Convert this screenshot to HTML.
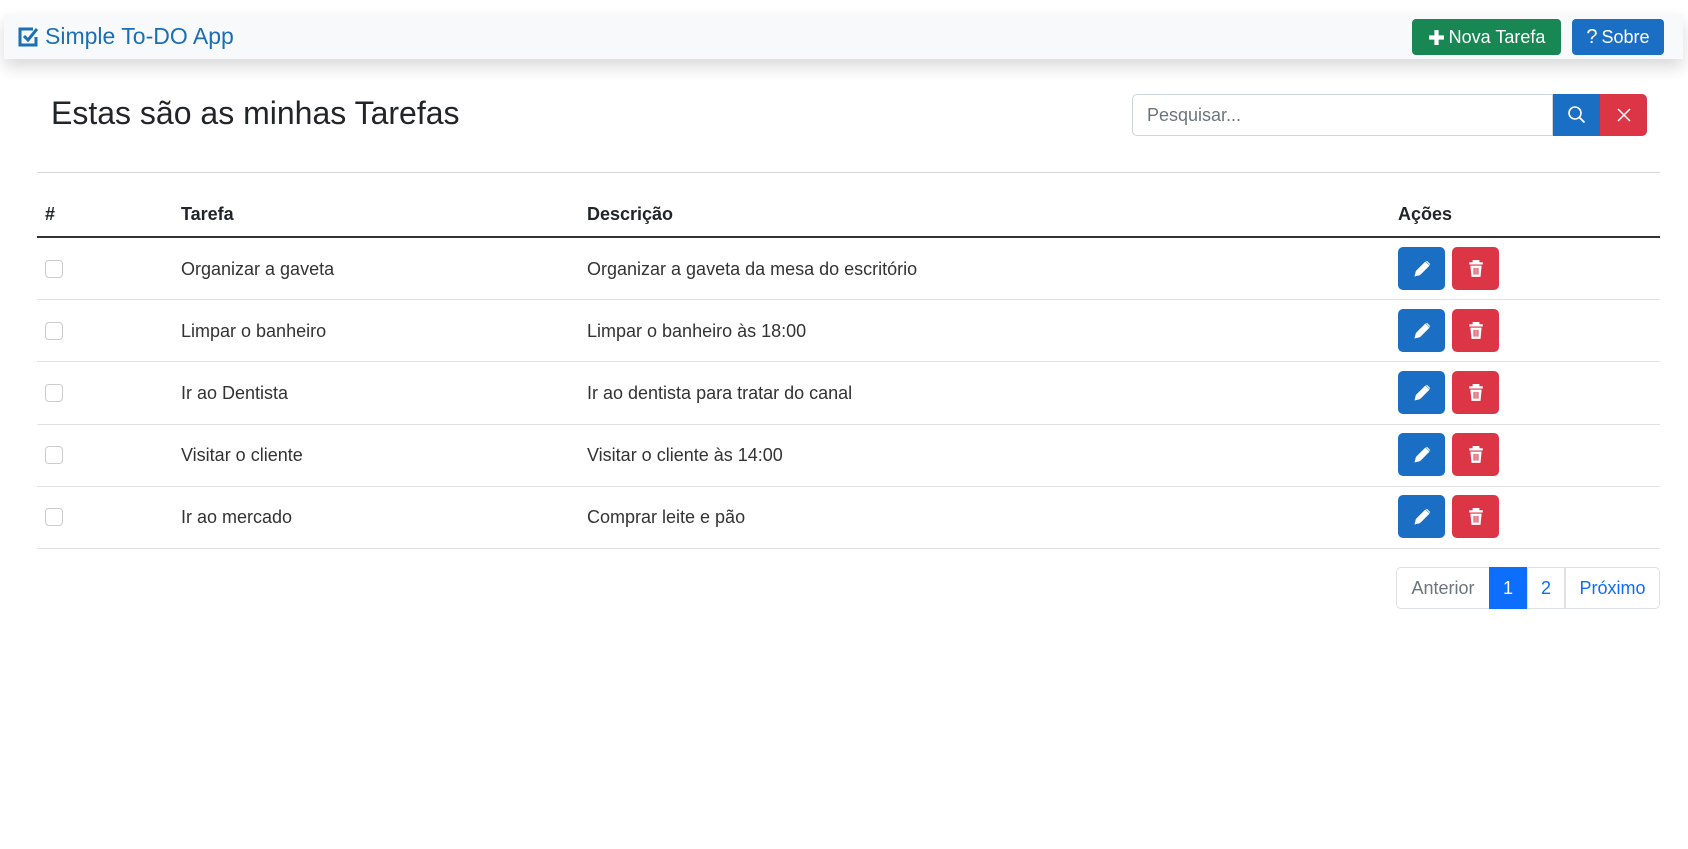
<!DOCTYPE html>
<html><head><meta charset="utf-8"><style>
*{box-sizing:border-box;margin:0;padding:0}
body{width:1688px;height:849px;background:#fff;font-family:"Liberation Sans",Arial,sans-serif;color:#212529;position:relative;overflow:hidden}
.nav{position:absolute;left:4px;top:14px;width:1679px;height:45px;background:#f8f9fa;box-shadow:0 8px 16px rgba(0,0,0,.15)}
.brand{position:absolute;left:14px;top:9px;font-size:23px;color:#1a6fb5;display:flex;align-items:center;gap:7px}
.btn{position:absolute;top:5px;height:36px;border-radius:4px;color:#fff;font-size:18px;display:flex;align-items:center;justify-content:center;gap:4px}
h1{position:absolute;left:51px;top:95px;font-size:32px;font-weight:400;color:#212529}
.search{position:absolute;left:1132px;top:94px;width:421px;height:42px;border:1px solid #ced4da;border-radius:5px 0 0 5px;font-size:18px;color:#6c757d;padding:10px 14px}
.sb{position:absolute;top:94px;height:42px;width:47px;display:flex;align-items:center;justify-content:center}
.hr{position:absolute;left:37px;top:172px;width:1623px;height:1px;background:#d8d8d8}
.th{position:absolute;top:204px;font-size:18px;font-weight:bold}
.line{position:absolute;left:37px;width:1623px;height:1px;background:#dee2e6}
.td{position:absolute;font-size:18px;color:#333}
.cb{position:absolute;left:45px;width:18px;height:18px;border:1px solid #ccc;border-radius:4px}
.ab{position:absolute;width:47px;height:43px;border-radius:5px;display:flex;align-items:center;justify-content:center}
.pg{position:absolute;top:567px;height:42px;border:1px solid #dee2e6;font-size:18px;display:flex;align-items:center;justify-content:center;color:#0d6efd}
</style></head><body>
<div class="nav">
 <div class="brand"><svg width="20" height="20" viewBox="0 0 20 20"><path d="M15 2H2v16h16v-8" fill="none" stroke="#1a6fb5" stroke-width="3"/><path d="M6 9l4 4 9-11" fill="none" stroke="#1a6fb5" stroke-width="3"/></svg>Simple To-DO App</div>
 <div class="btn" style="left:1408px;width:149px;background:#198754"><svg width="17" height="17" viewBox="0 0 16 16"><path d="M8 1v14M1 8h14" stroke="#fff" stroke-width="4"/></svg>Nova Tarefa</div>
 <div class="btn" style="left:1568px;width:92px;background:#1a6fc4"><b style="font-weight:400;font-size:20px">?</b>Sobre</div>
</div>
<h1>Estas são as minhas Tarefas</h1>
<div class="search">Pesquisar...</div>
<div class="sb" style="left:1553px;background:#1a6fc4"><svg width="20" height="20" viewBox="0 0 20 20"><circle cx="8" cy="8" r="6" fill="none" stroke="#fff" stroke-width="1.6"/><path d="M12.5 12.5l5 5" stroke="#fff" stroke-width="1.8"/></svg></div>
<div class="sb" style="left:1600px;background:#dc3545;border-radius:0 5px 5px 0"><svg width="16" height="16" viewBox="0 0 16 16"><path d="M2 2l12 12M14 2L2 14" stroke="#fff" stroke-width="1.5"/></svg></div>
<div class="hr"></div>
<div class="th" style="left:45px">#</div>
<div class="th" style="left:181px">Tarefa</div>
<div class="th" style="left:587px">Descrição</div>
<div class="th" style="left:1398px">Ações</div>
<div class="line" style="top:236px;height:2px;background:#333"></div>

<div class="cb" style="top:260px"></div><div class="td" style="left:181px;top:259px">Organizar a gaveta</div><div class="td" style="left:587px;top:259px">Organizar a gaveta da mesa do escritório</div>
<div class="line" style="top:299px"></div>
<div class="cb" style="top:322px"></div><div class="td" style="left:181px;top:321px">Limpar o banheiro</div><div class="td" style="left:587px;top:321px">Limpar o banheiro às 18:00</div>
<div class="line" style="top:361px"></div>
<div class="cb" style="top:384px"></div><div class="td" style="left:181px;top:383px">Ir ao Dentista</div><div class="td" style="left:587px;top:383px">Ir ao dentista para tratar do canal</div>
<div class="line" style="top:424px"></div>
<div class="cb" style="top:446px"></div><div class="td" style="left:181px;top:445px">Visitar o cliente</div><div class="td" style="left:587px;top:445px">Visitar o cliente às 14:00</div>
<div class="line" style="top:486px"></div>
<div class="cb" style="top:508px"></div><div class="td" style="left:181px;top:507px">Ir ao mercado</div><div class="td" style="left:587px;top:507px">Comprar leite e pão</div>
<div class="line" style="top:548px"></div>

<div id="acts"></div>
<script>
var tops=[247,309,371,433,495],h='';
tops.forEach(function(t){
h+='<div class="ab" style="left:1398px;top:'+t+'px;background:#1a6fc4"><svg width="18" height="18" viewBox="0 0 16 16"><path d="M2 14l1-4 8-8 3 3-8 8z M12 1l3 3" fill="#fff" stroke="#fff" stroke-width="1"/></svg></div>';
h+='<div class="ab" style="left:1452px;top:'+t+'px;background:#dc3545"><svg width="16" height="18" viewBox="0 0 14 16"><path d="M1 3h12M5 3V1h4v2" stroke="#fff" stroke-width="2" fill="none"/><path d="M2 5h10l-1 10H3z" fill="#fff"/><path d="M5.3 7v6M7 7v6M8.7 7v6" stroke="#dc3545" stroke-width="1"/></svg></div>';
});
document.getElementById('acts').innerHTML=h;
</script>

<div class="pg" style="left:1396px;width:94px;color:#6c757d;border-radius:5px 0 0 5px">Anterior</div>
<div class="pg" style="left:1489px;width:38px;background:#0d6efd;border-color:#0d6efd;color:#fff">1</div>
<div class="pg" style="left:1527px;width:38px">2</div>
<div class="pg" style="left:1565px;width:95px;border-radius:0 5px 5px 0">Próximo</div>
</body></html>
